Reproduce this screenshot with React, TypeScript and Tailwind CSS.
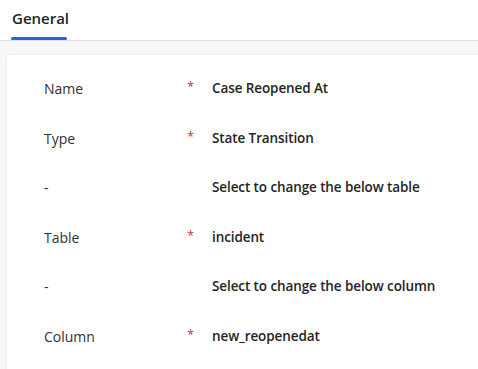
const rows = [
  { label: "Name", required: true, value: "Case Reopened At" },
  { label: "Type", required: true, value: "State Transition" },
  { label: "-", required: false, value: "Select to change the below table" },
  { label: "Table", required: true, value: "incident" },
  { label: "-", required: false, value: "Select to change the below column" },
  { label: "Column", required: true, value: "new_reopenedat" },
];

export default function App() {
  return (
    <div className="h-[369px] w-[478px] overflow-hidden bg-white font-['Segoe_UI','Open_Sans',sans-serif]">
      {/* Tab bar */}
      <div className="flex h-[41px] border-b border-[#e1dfdd] pl-[11px]">
        <div className="flex flex-col">
          <div className="flex h-[37px] items-center pl-[1px] text-[15px] font-semibold text-[#242424]">
            General
          </div>
          <div className="h-[3px] w-[56px] rounded-sm bg-[#2266e3]" />
        </div>
      </div>

      {/* Body */}
      <div className="h-full bg-[#f8f7f6] pl-[7px] pt-[14px]">
        <div className="h-full rounded-tl-[4px] bg-white pt-[23px] shadow-[0_0_2px_rgba(0,0,0,0.12)]">
          {rows.map((r, i) => (
            <div key={i} className="flex h-[49.6px] items-start text-[14px]">
              <div className="w-[180px] pl-[37px] text-[#323130]">{r.label}</div>
              <div className="w-[25px] text-[13px] leading-[16px] text-[#d13438]">{r.required ? "*" : ""}</div>
              <div className="text-[13.5px] font-semibold tracking-[-0.1px] text-[#242424]">{r.value}</div>
            </div>
          ))}
        </div>
      </div>
    </div>
  );
}
